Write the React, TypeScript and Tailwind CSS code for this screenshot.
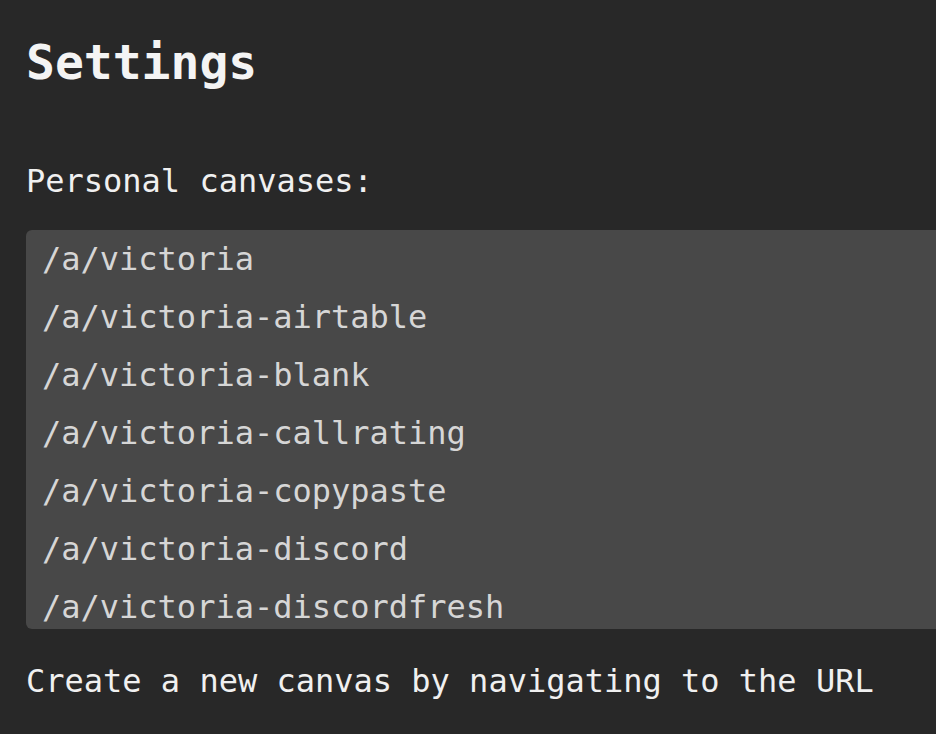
const canvases = [
  "/a/victoria",
  "/a/victoria-airtable",
  "/a/victoria-blank",
  "/a/victoria-callrating",
  "/a/victoria-copypaste",
  "/a/victoria-discord",
  "/a/victoria-discordfresh",
];

export default function App() {
  return (
    <div className="min-h-screen overflow-hidden bg-[#282828] pl-[26px] pt-[34px] font-['DejaVu_Sans_Mono','Liberation_Mono',monospace] text-[32px]">
      <h1 className="text-[48px] font-bold leading-[56px] text-[#f4f4f4]">Settings</h1>

      <p className="mt-[71px] leading-[40px] text-[#f0f0f0]">Personal canvases:</p>

      <ul className="mt-[29px] h-[399px] overflow-hidden rounded-l-[6px] bg-[#484848] pl-[16px] text-[#d6d6d6]">
        {canvases.map((path) => (
          <li key={path} className="h-[58px] whitespace-nowrap leading-[58px] last:h-[51px]">
            {path}
          </li>
        ))}
      </ul>

      <p className="mt-[32px] whitespace-nowrap leading-[40px] text-[#f0f0f0]">
        Create a new canvas by navigating to the URL
      </p>
    </div>
  );
}
